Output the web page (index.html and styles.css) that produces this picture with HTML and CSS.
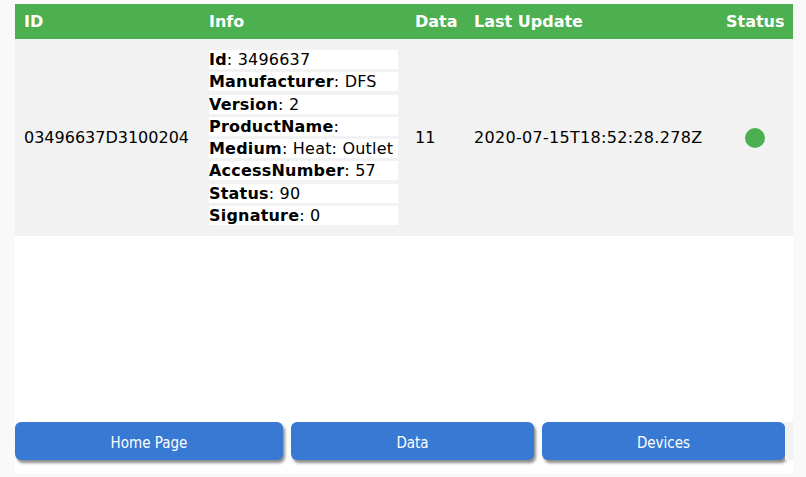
FILE: index.html
```html
<!DOCTYPE html>
<html lang="en">
<head>
<meta charset="utf-8">
<title>Devices</title>
<link rel="stylesheet" href="styles.css">
</head>
<body>
<div class="page">
  <table class="devices">
    <thead>
      <tr>
        <th class="col-id">ID</th>
        <th class="col-info">Info</th>
        <th class="col-data">Data</th>
        <th class="col-update">Last Update</th>
        <th class="col-status">Status</th>
      </tr>
    </thead>
    <tbody>
      <tr>
        <td>03496637D3100204</td>
        <td>
          <ul class="info">
            <li><b>Id</b>: 3496637</li>
            <li><b>Manufacturer</b>: DFS</li>
            <li><b>Version</b>: 2</li>
            <li><b>ProductName</b>:</li>
            <li><b>Medium</b>: Heat: Outlet</li>
            <li><b>AccessNumber</b>: 57</li>
            <li><b>Status</b>: 90</li>
            <li><b>Signature</b>: 0</li>
          </ul>
        </td>
        <td>11</td>
        <td class="date">2020-07-15T18:52:28.278Z</td>
        <td class="status-cell"><span class="dot"></span></td>
      </tr>
    </tbody>
  </table>
  <div class="spacer"></div>
  <nav class="buttons">
    <a class="btn btn-wide" href="#">Home Page</a>
    <a class="btn" href="#">Data</a>
    <a class="btn" href="#">Devices</a>
    <span class="tail"></span>
  </nav>
</div>
</body>
</html>
```
FILE: styles.css
```css
html, body {
  margin: 0;
  padding: 0;
  background: #f9f9f9;
}
body {
  font-family: "DejaVu Sans", Verdana, sans-serif;
  color: #000;
  padding: 4px 13px 4px 15px;
}
.page {
  background: #fff;
  height: 469px;
  display: flex;
  flex-direction: column;
}
.devices {
  width: 100%;
  border-collapse: collapse;
  table-layout: fixed;
}
.devices th {
  background: #4caf50;
  color: #fff;
  font-size: 16px;
  font-weight: bold;
  text-align: left;
  height: 35px;
  padding: 0 9px;
  box-sizing: border-box;
}
.col-id { width: 185px; }
.col-info { width: 206px; }
.col-data { width: 59px; }
.col-update { width: 252px; }
.col-status { width: 76px; }
.devices th.col-status { text-align: center; padding: 0 10px 0 9px; }
.devices td {
  background: #f2f2f2;
  font-size: 16px;
  padding: 11px 9px;
  vertical-align: middle;
}
.devices td.date { letter-spacing: 0.3px; }
.info {
  list-style: none;
  margin: 0;
  padding: 0;
  display: flex;
  flex-direction: column;
  gap: 3.3px;
}
.info li {
  background: #fff;
  height: 19px;
  line-height: 19px;
  white-space: nowrap;
  width: 189px;
  font-size: 16px;
  letter-spacing: 0.2px;
}
.status-cell { text-align: center; }
.devices td.status-cell { padding: 0 10px 0 9px; }
.dot {
  display: inline-block;
  width: 20px;
  height: 20px;
  border-radius: 50%;
  background: #4caf50;
  vertical-align: middle;
}
.spacer { flex: 1; }
.buttons {
  display: flex;
  gap: 8px;
  height: 38px;
  margin-bottom: 13px;
}
.btn {
  flex: 0 0 243px;
  background: #3779d3;
  color: #fff;
  text-decoration: none;
  font-family: "DejaVu Sans Condensed", "DejaVu Sans", sans-serif;
  font-stretch: condensed;
  font-size: 15px;
  border-radius: 6px;
  padding-top: 3px;
  box-sizing: border-box;
  display: flex;
  align-items: center;
  justify-content: center;
  box-shadow: 2px 3px 3px rgba(0, 0, 0, 0.45);
}
.btn-wide { flex-basis: 268px; }
.tail {
  flex: 1;
  background: #f2f2f2;
  margin-left: -8px;
  padding-left: 8px;
}
```
